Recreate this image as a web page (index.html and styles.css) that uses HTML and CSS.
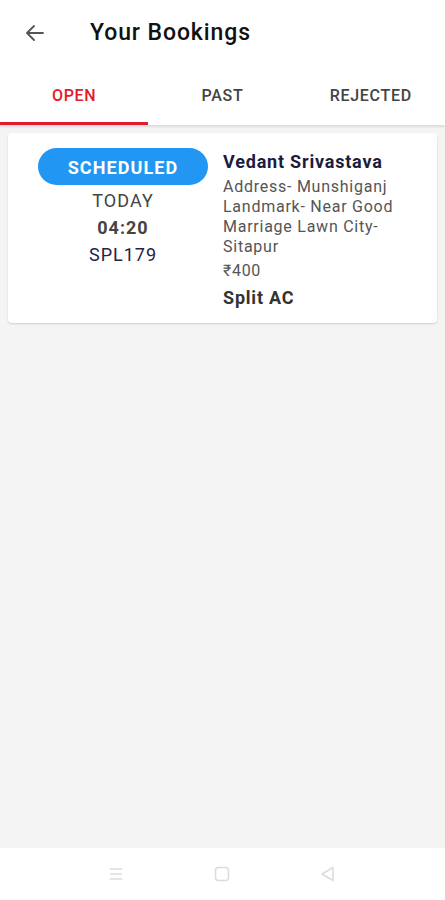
FILE: index.html
```html
<!DOCTYPE html>
<html>
<head>
<meta charset="utf-8">
<link rel="stylesheet" href="styles.css">
</head>
<body>
<div class="app">
  <header class="topbar">
    <svg class="back" width="24" height="24" viewBox="0 0 24 24"><path d="M20 12H5M11 5l-7 7 7 7" fill="none" stroke="#555" stroke-width="1.8" stroke-linecap="round" stroke-linejoin="round"/></svg>
    <h1 class="title">Your Bookings</h1>
  </header>
  <nav class="tabs">
    <div class="tab active">OPEN</div>
    <div class="tab">PAST</div>
    <div class="tab">REJECTED</div>
  </nav>
  <main class="content">
    <div class="card">
      <div class="left">
        <div class="pill">SCHEDULED</div>
        <div class="day">TODAY</div>
        <div class="time">04:20</div>
        <div class="code">SPL179</div>
      </div>
      <div class="right">
        <div class="name">Vedant Srivastava</div>
        <div class="addr">Address- Munshiganj Landmark- Near Good Marriage Lawn City-Sitapur</div>
        <div class="price">₹400</div>
        <div class="svc">Split AC</div>
      </div>
    </div>
  </main>
  <footer class="navbar">
    <svg width="20" height="20" viewBox="0 0 20 20"><path d="M4 5h12M4 10h12M4 15h12" stroke="#ddd" stroke-width="1.6" fill="none"/></svg>
    <svg width="20" height="20" viewBox="0 0 20 20"><rect x="3.5" y="3.5" width="13" height="13" rx="3" stroke="#ddd" stroke-width="1.6" fill="none"/></svg>
    <svg width="20" height="20" viewBox="0 0 20 20"><path d="M15 3.5v13L4 10z" stroke="#ddd" stroke-width="1.6" stroke-linejoin="round" fill="none"/></svg>
  </footer>
</div>
</body>
</html>
```
FILE: styles.css
```css
* { box-sizing: border-box; }
html, body { margin: 0; padding: 0; }
body { font-family: Roboto, "Noto Sans", sans-serif; background: #f4f4f4; }
.app { width: 445px; height: 900px; display: flex; flex-direction: column; }
.topbar { height: 67px; background: #fff; display: flex; align-items: center; padding-left: 23px; }
.back { display: block; margin-top: -2px; }
.title { margin: -3px 0 0 43px; font-size: 23px; font-weight: 500; color: #111; letter-spacing: 0.9px; }
.tabs { height: 58px; background: #fff; display: flex; box-shadow: 0 2px 2px rgba(0,0,0,0.1); position: relative; z-index: 1; }
.tab { flex: 1; display: flex; align-items: center; justify-content: center; font-size: 16px; font-weight: 500; color: #444; padding-top: 2px; border-bottom: 3px solid transparent; letter-spacing: 0.7px; }
.tab.active { color: #e31b2a; border-bottom-color: #e31b2a; }
.content { flex: 1; padding: 8px 8px; }
.card { background: #fff; border-radius: 4px; box-shadow: 0 1px 2px rgba(0,0,0,0.15); display: flex; padding: 15px 0 14px 30px; height: 190px; }
.left { width: 170px; display: flex; flex-direction: column; align-items: center; }
.pill { width: 170px; height: 37px; border-radius: 19px; background: #2196f3; color: #fff; font-weight: 700; font-size: 18px; display: flex; align-items: center; justify-content: center; letter-spacing: 1.1px; padding-top: 1px; }
.day { font-size: 18px; color: #444; margin-top: 3px; line-height: 26px; letter-spacing: 1.1px; }
.time { font-size: 18px; font-weight: 700; color: #444; line-height: 27px; letter-spacing: 1px; }
.code { font-size: 18px; color: #23234a; line-height: 27px; letter-spacing: 1px; }
.right { margin-left: 15px; width: 200px; }
.name { font-size: 18px; font-weight: 700; color: #1c1c40; line-height: 24px; margin-top: 2px; letter-spacing: 0.8px; }
.addr { font-size: 16px; color: #555; line-height: 20px; margin-top: 3px; letter-spacing: 0.75px; width: 180px; }
.price { font-size: 16px; color: #555; line-height: 22px; margin-top: 3px; letter-spacing: 0.7px; }
.svc { font-size: 18px; font-weight: 700; color: #333; line-height: 30px; margin-top: 1px; letter-spacing: 0.8px; }
.navbar { height: 52px; background: #fff; display: flex; align-items: center; justify-content: center; gap: 86px; padding-right: 2px; }
```
